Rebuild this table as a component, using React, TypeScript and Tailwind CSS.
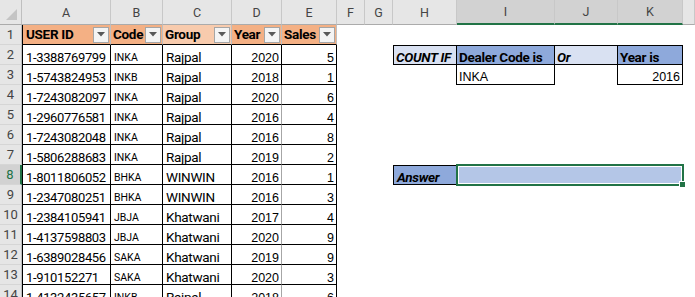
import React from "react";

const rows = [
  ["1-3388769799", "INKA", "Rajpal", "2020", "5"],
  ["1-5743824953", "INKB", "Rajpal", "2018", "1"],
  ["1-7243082097", "INKA", "Rajpal", "2020", "6"],
  ["1-2960776581", "INKA", "Rajpal", "2016", "4"],
  ["1-7243082048", "INKA", "Rajpal", "2016", "8"],
  ["1-5806288683", "INKA", "Rajpal", "2019", "2"],
  ["1-8011806052", "BHKA", "WINWIN", "2016", "1"],
  ["1-2347080251", "BHKA", "WINWIN", "2016", "3"],
  ["1-2384105941", "JBJA", "Khatwani", "2017", "4"],
  ["1-4137598803", "JBJA", "Khatwani", "2020", "9"],
  ["1-6389028456", "SAKA", "Khatwani", "2019", "9"],
  ["1-910152271", "SAKA", "Khatwani", "2020", "3"],
  ["1-4132435657", "INKB", "Rajpal", "2018", "6"],
];

const colHeads = [
  { l: "A", w: "w-[89px]", sel: false },
  { l: "B", w: "w-[52px]", sel: false },
  { l: "C", w: "w-[69px]", sel: false },
  { l: "D", w: "w-[50px]", sel: false },
  { l: "E", w: "w-[55px]", sel: false },
  { l: "F", w: "w-[28px]", sel: false },
  { l: "G", w: "w-[28px]", sel: false },
  { l: "H", w: "w-[64px]", sel: false },
  { l: "I", w: "w-[98px]", sel: true },
  { l: "J", w: "w-[63px]", sel: true },
  { l: "K", w: "w-[65px]", sel: true },
  { l: "", w: "w-[12px]", sel: false },
];

const calibri = "font-['Roboto',sans-serif] text-[13.5px] tracking-[-0.3px] leading-none";
const idFont = "font-['Roboto',sans-serif] text-[13px] tracking-[-0.35px] leading-none";
const arial = "font-['Liberation_Sans',Arial,sans-serif] text-[12.5px] leading-none";

const FilterBtn = () => (
  <div className="mr-px flex h-4 w-4 shrink-0 items-center justify-center border border-[#a6a6a6] bg-[#f4f4f4]">
    <svg width="8" height="5" viewBox="0 0 8 5">
      <path d="M0 0h8L4 4.5z" fill="#595959" />
    </svg>
  </div>
);

const RowHead = ({ n }: { n: number }) => {
  const active = n === 8;
  return (
    <div
      className={`flex w-[22px] shrink-0 items-center justify-center border-b border-b-[#d6d6d6] font-['Roboto',sans-serif] text-[13px] leading-none ${
        active
          ? "border-r-2 border-r-[#217346] bg-[#d2d2d2] text-[#217346]"
          : "border-r border-r-[#bfbfbf] bg-[#e6e6e6] text-[#444]"
      }`}
    >
      {n}
    </div>
  );
};

const RightPanel = ({ n }: { n: number }) => {
  if (n === 2) {
    return (
      <>
        <div className={`flex w-[64px] shrink-0 items-end border border-black bg-[#d9e1f2] pl-[2px] font-bold italic ${calibri}`}>
          COUNT IF
        </div>
        <div className={`flex w-[98px] shrink-0 items-end border-y border-r border-black bg-[#8ea9db] pl-[2px] font-bold ${calibri}`}>
          Dealer Code is
        </div>
        <div className={`flex w-[63px] shrink-0 items-end border-y border-r border-black bg-[#d9e1f2] pl-[2px] font-bold italic ${calibri}`}>
          Or
        </div>
        <div className={`flex w-[65px] shrink-0 items-end border-y border-r border-black bg-[#8ea9db] pl-[2px] font-bold ${calibri}`}>
          Year is
        </div>
      </>
    );
  }
  if (n === 3) {
    return (
      <>
        <div className="w-[64px] shrink-0 border-r border-black" />
        <div className={`flex w-[98px] shrink-0 items-end border-r border-b border-black pb-px pl-[2px] ${arial}`}>INKA</div>
        <div className="w-[63px] shrink-0 border-r border-black" />
        <div className={`flex w-[65px] shrink-0 items-end justify-end border-r border-b border-black pr-[2px] pb-px ${arial}`}>
          2016
        </div>
      </>
    );
  }
  if (n === 8) {
    return (
      <>
        <div className={`flex w-[64px] shrink-0 items-end border border-black bg-[#8ea9db] pl-[3px] font-bold italic ${calibri}`}>
          Answer
        </div>
        <div className="relative w-[226px] shrink-0 bg-[#b4c6e7]">
          <div className="absolute -inset-px z-10 border-2 border-[#217346] shadow-[inset_0_0_0_1px_#fff]" />
          <div className="absolute -right-[3px] -bottom-[3px] z-20 h-[7px] w-[7px] border border-white bg-[#217346]" />
        </div>
      </>
    );
  }
  return <div className="w-[290px] shrink-0" />;
};

export default function App() {
  return (
    <div className="h-[297px] w-[695px] overflow-hidden bg-white text-black">
      {/* column letters */}
      <div className="flex h-[25px]">
        <div className="relative w-[22px] shrink-0 border-r border-b border-r-[#bfbfbf] border-b-[#ababab] bg-[#e6e6e6]">
          <svg className="absolute right-[4px] bottom-[4px]" width="11" height="11" viewBox="0 0 11 11">
            <path d="M11 0v11H0z" fill="#c4c4c4" />
          </svg>
        </div>
        {colHeads.map((c) => (
          <div
            key={c.l + c.w}
            className={`${c.w} flex shrink-0 items-center justify-center border-r border-r-[#c8c8c8] pt-[2px] font-['Roboto',sans-serif] text-[12.5px] text-[#444] ${
              c.sel ? "border-b-2 border-b-[#217346] bg-[#d2d2d2]" : "border-b border-b-[#ababab] bg-[#e6e6e6]"
            }`}
          >
            {c.l}
          </div>
        ))}
      </div>

      {/* row 1: table headers */}
      <div className="flex h-5">
        <RowHead n={1} />
        <div className={`flex w-[89px] shrink-0 items-center justify-between border-l border-r border-b border-l-black border-r-[#bfbfbf] border-b-black bg-[#f4b084] pl-[3px] font-bold ${calibri}`}>
          USER ID
          <FilterBtn />
        </div>
        <div className={`flex w-[52px] shrink-0 items-center justify-between border-r border-b border-r-[#bfbfbf] border-b-black bg-[#f4b084] pl-[2px] font-bold ${calibri}`}>
          Code
          <FilterBtn />
        </div>
        <div className={`flex w-[69px] shrink-0 items-center justify-between border-r border-b border-r-[#bfbfbf] border-b-black bg-[#f8cbad] pl-[2px] font-bold ${calibri}`}>
          Group
          <FilterBtn />
        </div>
        <div className={`flex w-[50px] shrink-0 items-center justify-between border-r border-b border-r-[#bfbfbf] border-b-black bg-[#f4b084] pl-[2px] font-bold ${calibri}`}>
          Year
          <FilterBtn />
        </div>
        <div className={`flex w-[55px] shrink-0 items-center justify-between border-r border-b border-r-[#bfbfbf] border-b-black bg-[#f4b084] pl-[2px] font-bold ${calibri}`}>
          Sales
          <FilterBtn />
        </div>
        <div className="w-[302px] shrink-0" />
      </div>

      {rows.map((r, i) => {
        const n = i + 2;
        return (
          <div key={n} className="flex h-5">
            <RowHead n={n} />
            <div className={`flex w-[89px] shrink-0 items-end border-l border-r border-b border-black pl-[3px] ${idFont}`}>{r[0]}</div>
            <div className="flex w-[52px] shrink-0 items-end border-r border-b border-black pb-px pl-[3px] font-['Roboto',sans-serif] text-[10.5px] leading-none">
              {r[1]}
            </div>
            <div className={`flex w-[69px] shrink-0 items-end border-r border-b border-black pl-[3px] ${calibri}`}>{r[2]}</div>
            <div
              className={`flex w-[50px] shrink-0 items-end justify-end border-r border-b border-b-black pr-[2px] ${arial} ${
                n < 4 ? "border-r-black" : "border-r-[#a6a6a6]"
              }`}
            >
              {r[3]}
            </div>
            <div className={`flex w-[55px] shrink-0 items-end justify-end border-r border-b border-black pr-[2px] ${arial}`}>{r[4]}</div>
            <div className="w-[28px] shrink-0" />
            <div className="w-[28px] shrink-0" />
            <RightPanel n={n} />
            <div className="w-[12px] shrink-0" />
          </div>
        );
      })}
    </div>
  );
}
